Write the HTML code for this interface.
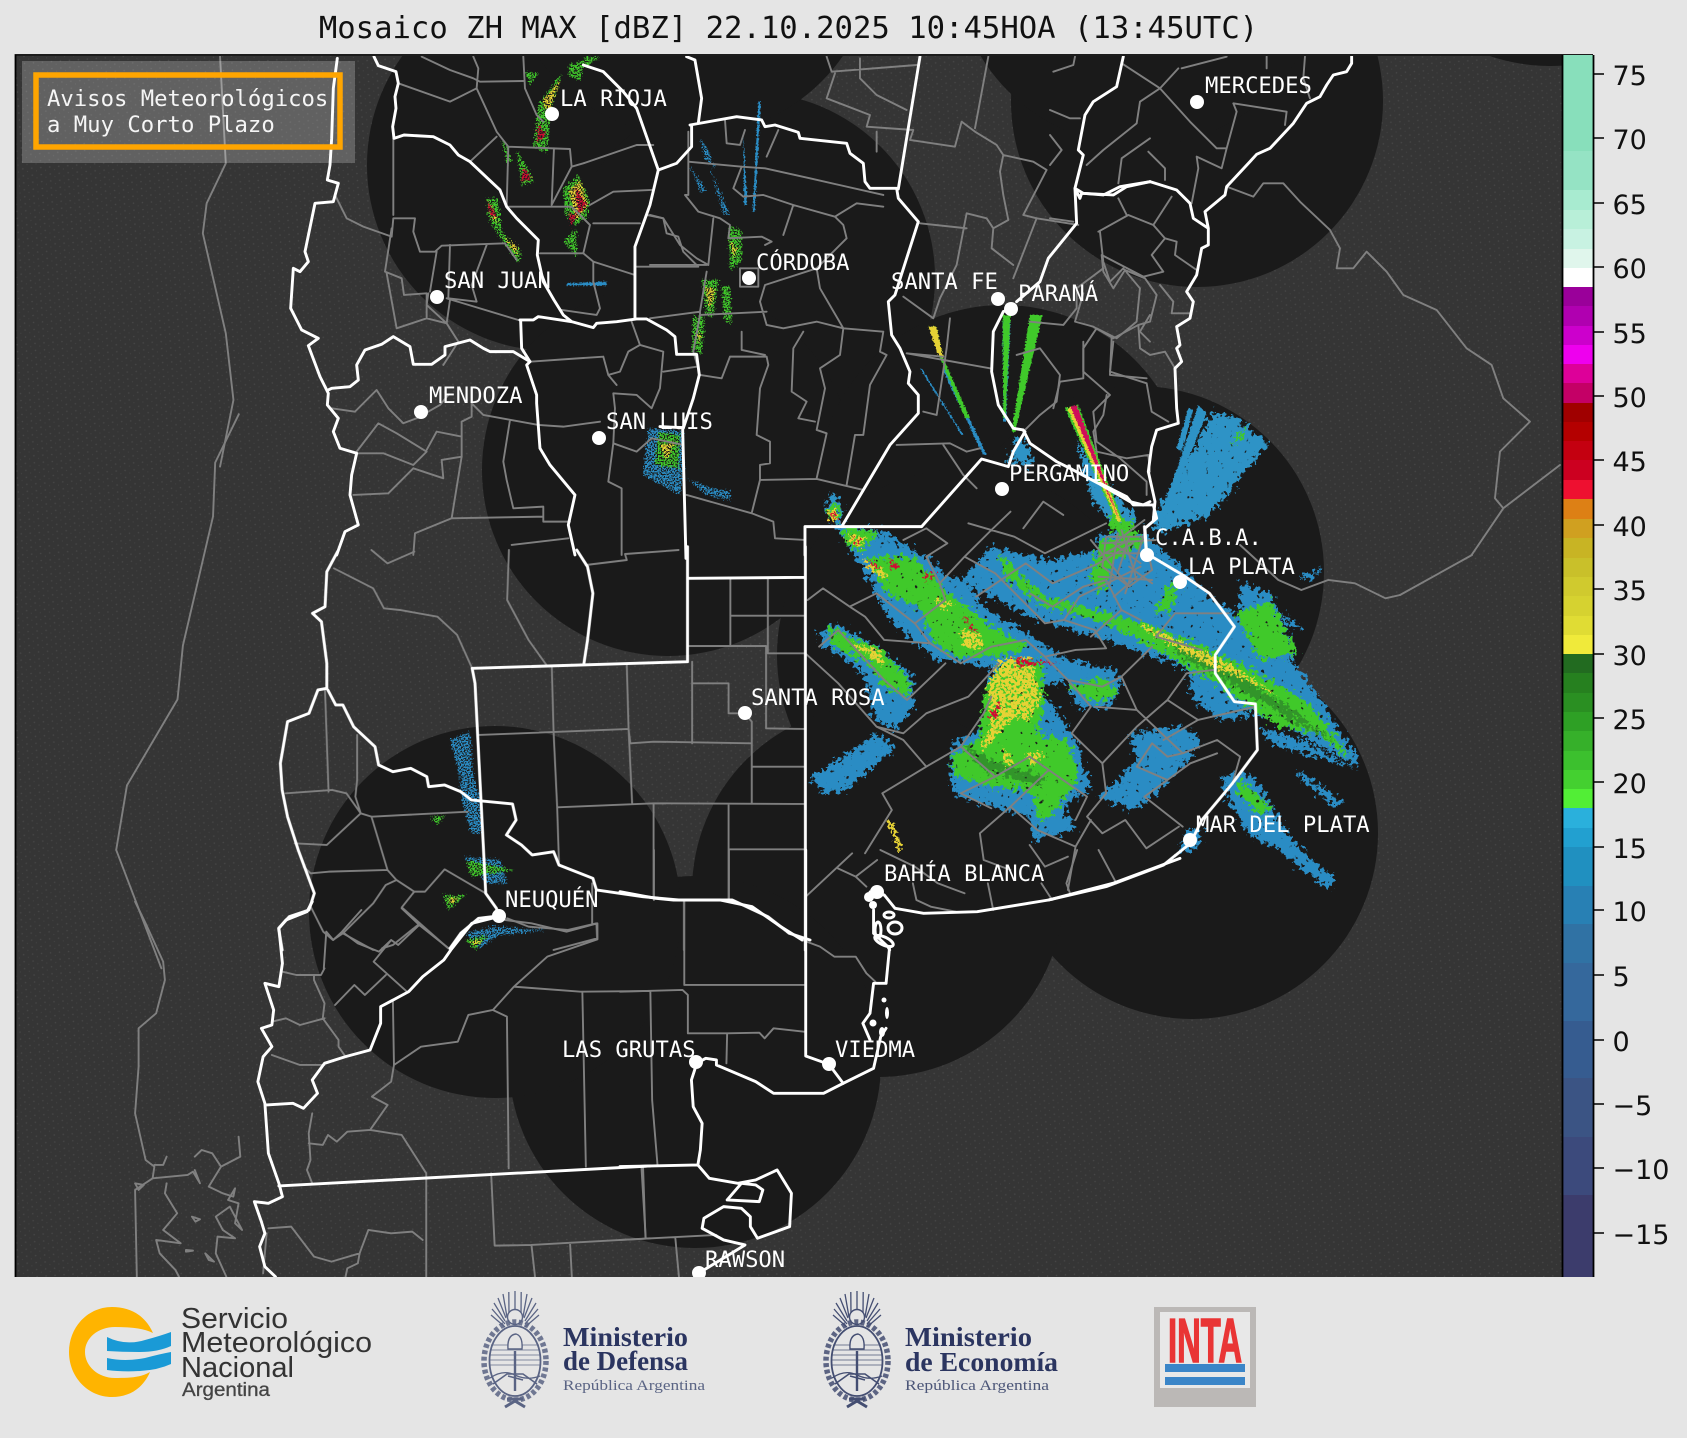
<!DOCTYPE html>
<html lang="es"><head><meta charset="utf-8"><title>Mosaico ZH MAX</title>
<style>
html,body{margin:0;padding:0;background:#e5e5e5;width:1687px;height:1438px;overflow:hidden}
svg{display:block}
.g path,.g polyline{fill:none;stroke:#808080;stroke-width:1.9;stroke-linejoin:round;stroke-linecap:round;vector-effect:non-scaling-stroke}
.w path{fill:none;stroke:#fff;stroke-width:2.9;stroke-linejoin:round;stroke-linecap:round;vector-effect:non-scaling-stroke}
.lab text{font-family:"DejaVu Sans Mono","Liberation Mono",monospace;font-size:22.2px;fill:#fff}
.tick text{font-family:"DejaVu Sans","Liberation Sans",sans-serif;font-size:27px;fill:#111}
</style></head><body>
<svg xmlns="http://www.w3.org/2000/svg" width="1687" height="1438" viewBox="0 0 1687 1438">
<defs>
<pattern id="dots" width="9" height="7" patternUnits="userSpaceOnUse" patternTransform="rotate(-4)"><rect width="9" height="7" fill="#353535"/><circle cx="2" cy="2" r=".8" fill="#474747"/><circle cx="6.5" cy="5" r=".6" fill="#424242"/></pattern>
<clipPath id="mapc"><rect x="16" y="56" width="1546" height="1221"/></clipPath>
<filter id="n" filterUnits="userSpaceOnUse" x="0" y="0" width="1687" height="1438"><feTurbulence type="fractalNoise" baseFrequency=".22" numOctaves="3" seed="4" result="t"/><feDisplacementMap in="SourceGraphic" in2="t" scale="18" xChannelSelector="R" yChannelSelector="G" result="d"/><feTurbulence type="fractalNoise" baseFrequency=".2" numOctaves="2" seed="7"/><feColorMatrix type="matrix" values="0 0 0 0 0 0 0 0 0 0 0 0 0 0 0 0 0 0 -12 9.6" result="m"/><feComposite in="d" in2="m" operator="in"/></filter>
<filter id="y" filterUnits="userSpaceOnUse" x="0" y="0" width="1687" height="1438"><feTurbulence type="fractalNoise" baseFrequency=".3" numOctaves="2" seed="11" result="t"/><feDisplacementMap in="SourceGraphic" in2="t" scale="12" xChannelSelector="R" yChannelSelector="G" result="d"/><feTurbulence type="fractalNoise" baseFrequency=".35" numOctaves="2" seed="3"/><feColorMatrix type="matrix" values="0 0 0 0 0 0 0 0 0 0 0 0 0 0 0 0 0 0 -14 8.6" result="m"/><feComposite in="d" in2="m" operator="in"/></filter>
<filter id="s" filterUnits="userSpaceOnUse" x="0" y="0" width="1687" height="1438"><feTurbulence type="fractalNoise" baseFrequency=".6" numOctaves="1" seed="9" result="t"/><feDisplacementMap in="SourceGraphic" in2="t" scale="9" xChannelSelector="R" yChannelSelector="G" result="d"/><feTurbulence type="fractalNoise" baseFrequency=".7" numOctaves="1" seed="5"/><feColorMatrix type="matrix" values="0 0 0 0 0 0 0 0 0 0 0 0 0 0 0 0 0 0 -16 9" result="m"/><feComposite in="d" in2="m" operator="in"/></filter>
<filter id="r" filterUnits="userSpaceOnUse" x="0" y="0" width="1687" height="1438"><feTurbulence type="fractalNoise" baseFrequency=".6" numOctaves="1" seed="2"/><feDisplacementMap in="SourceGraphic" scale="4" xChannelSelector="R" yChannelSelector="G"/></filter>
<symbol id="arms" viewBox="-40 -66 80 120" overflow="visible">
<path d="M0-46V-70M-6-46L-6.2-69M6-46L6.2-69M-8-44L-12-67M8-44L12-67M-9-43L-17-63M9-43L17-63M-10-40L-21-58M10-40L21-58M-10-37L-23-52M10-37L23-52M-10-34L-24-46M10-34L24-46" stroke="currentColor" stroke-width="1.3" fill="none"/>
<circle cx="0" cy="-44" r="7.5" fill="#e5e5e5" stroke="currentColor" stroke-width="1.4"/>
<ellipse cx="0" cy="0" rx="31" ry="39" fill="none" stroke="currentColor" stroke-width="5.5" stroke-dasharray="4 2.5" opacity=".85"/>
<ellipse cx="0" cy="0" rx="25.5" ry="35" fill="none" stroke="currentColor" stroke-width="1.8"/>
<path d="M-24-16H24M-25-11H25M-25.5-6H25.5M-25.5-1H25.5M-25.5 4H25.5" stroke="currentColor" stroke-width="1" opacity=".7" fill="none"/>
<path d="M-25 17Q-12 8 0 14T25 15" stroke="currentColor" stroke-width="1.3" fill="none"/>
<path d="M0-10V30" stroke="currentColor" stroke-width="2.4"/>
<path d="M-7-12Q-8-26 1-27Q8-25 7-12Z" fill="#e5e5e5" stroke="currentColor" stroke-width="1.4"/>
<path d="M-22 23L-8 13H8L22 23M-7 15L8 19" stroke="currentColor" stroke-width="1.6" fill="none"/>
<path d="M-10 46L0 40L10 46M-8 38H8" stroke="currentColor" stroke-width="3" fill="none"/>
</symbol>
</defs>

<text x="788.5" y="38" text-anchor="middle" font-family="DejaVu Sans Mono,Liberation Mono,monospace" font-size="30.6" fill="#111">Mosaico ZH MAX [dBZ] 22.10.2025 10:45HOA (13:45UTC)</text>

<g clip-path="url(#mapc)">
<rect x="16" y="56" width="1546" height="1221" fill="url(#dots)"/>
<g fill="#1a1a1a">
<circle cx="553" cy="165" r="186"/><circle cx="749" cy="278" r="186"/><circle cx="690" cy="-50" r="186"/>
<circle cx="1197" cy="101" r="186"/><circle cx="1140" cy="-40" r="186"/><circle cx="1550" cy="-120" r="186"/>
<circle cx="668" cy="470" r="186"/><circle cx="1003" cy="491" r="186"/><circle cx="1138" cy="572" r="186"/>
<circle cx="963" cy="655" r="186"/><circle cx="1192" cy="833" r="186"/><circle cx="878" cy="891" r="186"/>
<circle cx="695" cy="1062" r="186"/><circle cx="495" cy="912" r="186"/>
</g>

<!-- radar echoes -->
<g filter="url(#n)">
<g transform="translate(800 500) scale(.3827 .3333)">
<path fill="#2a8cc4" d="M390 800L400 730L470 690L480 600L500 500L650 600L720 720L760 860L690 920L720 990L610 1020L600 950L500 920L400 880ZM420 240L500 140L650 180L800 150L900 250L1100 310L1300 500L1450 760L1460 800L1300 700L1150 620L1000 500L800 420L600 350ZM60 10L120 80L210 90L340 180L380 230L430 240L480 320L620 420L700 480L820 510L840 560L810 620L720 620L700 540L640 560L500 500L360 480L240 370L160 200L100 90ZM50 400L90 370L200 440L290 520L300 620L250 690L190 650L170 530L110 470L60 440ZM30 830L200 700L250 740L120 870L60 880ZM860 700L1000 680L1050 720L1000 800L930 880L870 930L780 890L830 840L880 780ZM1100 830L1180 820L1290 1030L1400 1140L1380 1170L1250 1050L1170 1000L1120 900ZM1300 810L1420 910L1400 920L1310 840ZM1010 990L1050 990L1040 1040L990 1060ZM780 100L900 100L1040 250L1100 330L1000 340L860 300L760 220ZM1150 250L1230 280L1300 460L1260 500L1150 450ZM1200 680L1330 730L1440 800L1380 780L1230 730ZM1300 230L1360 210L1340 240ZM1260 340L1310 380L1280 385ZM1010 510L1090 540L1130 600L1180 650L1100 660L1030 600Z"/>
<path fill="#3fc92c" d="M390 780L470 710L480 580L530 480L630 480L640 600L620 700L700 720L730 830L690 900L630 970L600 870L500 860L410 830ZM170 170L300 170L370 260L500 380L600 440L520 470L400 470L340 410L320 330L230 280ZM520 160L640 290L900 370L1050 440L1200 520L1340 620L1440 780L1350 700L1250 680L1100 560L950 460L800 370L620 310L530 220ZM780 130L880 90L900 130L820 180L790 280L760 240ZM1140 340L1230 300L1300 460L1200 480ZM1150 840L1230 920L1210 950L1140 880ZM75 380L210 450L280 530L290 590L220 560L180 490L80 430ZM700 560L800 530L830 580L780 610ZM970 250L1000 240L960 340L930 330Z"/>
<path fill="#2d7f28" d="M950 410L1100 490L1250 600L1400 730L1300 670L1140 560L1000 470ZM420 730L520 790L640 830L620 860L480 810Z" opacity=".7"/>
</g>
<g transform="translate(1050 55) scale(.3333)">
<path fill="#2e93c6" d="M300 1410L490 1070L560 1090L655 1165L480 1380L340 1430Z"/>
<path fill="#3fc92c" d="M545 1170L590 1110L570 1165Z"/>
</g>
<g transform="translate(650 55) scale(.3333)">
<path fill="#2e93c6" d="M1075 1225L1100 1140L1140 1180L1145 1230ZM1280 1150L1350 1260L1470 1400L1400 1420L1330 1340Z"/>
<path fill="#2e93c6" d="M525 1370L545 1315L580 1350L570 1410Z"/>
<path fill="#3fc92c" d="M530 1375L555 1345L575 1360L565 1405ZM575 1415L680 1430L640 1490L590 1470ZM1380 1380L1450 1400L1440 1440L1385 1430Z"/>
</g>
</g>
<g filter="url(#y)">
<g transform="translate(800 500) scale(.3827 .3333)">
<path fill="#e6d236" d="M490 560L520 480L600 470L630 590L600 660L560 650L520 700L480 750L470 740L500 680ZM525 730L560 790L540 800ZM590 760L640 760L610 800ZM415 390L470 400L480 450L430 440ZM350 300L400 310L370 330ZM160 170L220 210L230 240L180 210ZM130 430L210 450L220 500ZM890 370L1120 490L1250 590L1200 560L1040 480L900 390ZM1380 680L1420 720L1400 700ZM130 100L150 140L120 120ZM225 960L240 965L270 1050L260 1055Z"/>
<path fill="#d01030" d="M560 475L680 490L600 495L570 505ZM425 350L470 400L440 385ZM235 175L262 200L235 208ZM320 215L370 228L330 238ZM175 175L215 205L190 200ZM490 650L525 600L510 660ZM80 30L100 65L75 55Z"/>
</g>
<g transform="translate(650 55) scale(.3333)">
<path fill="#e6d236" d="M535 1365L560 1365L560 1400L540 1400ZM600 1440L650 1450L625 1480Z"/>
<path fill="#d01030" d="M540 1375L555 1375L555 1395ZM610 1450L635 1455L620 1470Z"/>
</g>
</g>
<g filter="url(#s)">
<g transform="translate(250 55) scale(.3333)">
<path fill="#2a8cc4" d="M1195 1120L1300 1130L1300 1250L1290 1320L1180 1260ZM1310 1270L1380 1300L1440 1310L1440 1335L1370 1320Z"/>
<path fill="#3fc92c" d="M1225 1130L1290 1140L1285 1240L1215 1230ZM940 400L985 360L1020 440L1010 490L975 510L945 480ZM940 560L980 520L980 605ZM865 150L935 55L905 160L890 295L850 275ZM710 430L745 430L755 530L815 590L805 625L765 570L715 490ZM755 250L790 320L770 325ZM800 285L855 380L815 390ZM825 50L865 55L840 90ZM955 30L1005 15L990 75L955 65ZM1000 5L1050 5L1010 35Z"/>
<path fill="#e6d236" d="M955 410L990 375L1015 450L980 495ZM875 140L930 75L895 175ZM760 545L800 570L805 605ZM1230 1170L1275 1160L1250 1215ZM725 450L745 510L720 480Z"/>
<path fill="#d01030" d="M975 395L1010 450L985 475ZM865 205L890 240L860 265ZM710 430L740 485L722 485ZM820 335L845 372L815 380ZM765 265L787 315ZM955 475L980 478L965 515Z"/>
</g>
<g transform="translate(650 55) scale(.3333)">
<path fill="#2a8cc4" d="M150 250L178 290L195 340L165 310ZM180 340L240 480L222 480ZM120 330L170 410L150 410Z"/>
<path fill="#3fc92c" d="M235 515L275 525L275 620L240 645ZM155 675L205 675L190 785L170 785ZM130 785L165 785L155 895L125 885ZM215 695L240 695L245 805L222 795Z"/>
<path fill="#e6d236" d="M165 695L195 705L180 765ZM240 560L262 580L250 610ZM140 830L155 840L145 870Z"/>
</g>
<g transform="translate(250 550) scale(.35714 .3333)">
<path fill="#2a8cc4" d="M560 570L615 545L625 680L645 750L650 850L620 850L595 760L585 670ZM605 1150L680 1130L830 1140L700 1155L640 1195ZM600 920L700 930L720 1000L660 1000Z"/>
<path fill="#3fc92c" d="M605 930L740 960L620 980ZM540 1035L605 1035L555 1080ZM605 1170L665 1155L630 1200ZM505 800L545 795L525 825Z"/>
<path fill="#e6d236" d="M555 1045L585 1045L560 1065ZM620 1175L650 1170L630 1190Z"/>
</g>
</g>
<g filter="url(#r)">
<g transform="translate(1050 55) scale(.3333)">
<path fill="#2e93c6" d="M335 1380L445 1050L470 1075L345 1390ZM380 1180L415 1060L430 1065L395 1190Z"/>
</g>
<g transform="translate(250 55) scale(.3333)"><path fill="#2a8cc4" d="M950 685L1070 680L1070 692L950 692Z"/></g>
<g transform="translate(650 55) scale(.3333)">
<path fill="#2a8cc4" d="M325 140H332L315 470H308ZM280 240L292 450L282 450ZM885 930L1010 1200L1000 1200L880 950ZM1058 800H1082L1068 1100H1060ZM810 940L818 945L940 1140L935 1140Z"/>
<path fill="#3fc92c" d="M1140 780H1178L1095 1130H1085ZM1058 780H1082L1067 1090H1060ZM835 815H860L880 910L960 1090L945 1090L875 920Z"/>
<path fill="#e6d236" d="M835 815H860L880 910L865 900Z"/>
<path fill="#3fc92c" d="M1245 1060L1285 1050L1420 1400L1400 1400Z"/>
<path fill="#e6d236" d="M1252 1060L1278 1052L1415 1400L1404 1400Z"/>
<path fill="#d0105a" d="M1262 1056L1280 1050L1410 1400Z"/>
</g>
</g>

<!-- grey boundaries -->
<g class="g">
<path transform="translate(0 0) scale(.3827 .3333)" d="M575 170L590 490L540 610L530 700L590 1000L610 1200L575 1400"/>
<path transform="scale(1.0759)" d="M222 385L200 430L198 480L170 600L165 650L118 730L108 790L150 900"/>
<g transform="translate(250 55) scale(.3333)">
<path d="M515 5L600 45L670 70L690 80L820 78M445 85L600 140L680 100L685 40L670 5M680 100L740 230L775 275L960 282L965 335L905 450L912 280M660 320L740 245M775 275L770 455L965 455L1020 510L1000 595L870 595M820 5L825 100L860 180L880 200M965 335L1000 325L1160 270L1210 270M1020 450L1090 410L1205 405M1030 505L1170 505M1190 480L1240 490L1250 535L1285 545L1300 590L1345 635L1160 635M1155 660L1030 620L1000 595M1030 620L1030 680L1050 760L1040 780L935 765"/>
<path d="M255 420L290 490L340 515L425 545L430 490L495 490L490 530L510 590L555 590L575 572L765 565L800 615M425 520L405 650L455 670L462 720L530 715L530 790L440 820L410 655M430 250L430 480M600 570L595 730L680 740L665 690L710 570M560 590L540 710M590 730L805 795M530 790L590 805L625 860L580 930M535 715L530 750L590 805L600 735"/>
<path d="M245 1060L315 1070L380 1005L415 1060L460 1105L500 1090L570 1050L595 1020M320 1190L385 1105L440 1135L530 1190L490 1230L400 1195L320 1195M490 1240L580 1270L575 1215L635 1205L635 1145L560 1130L530 1185M490 1240L415 1315L310 1320M635 1205L635 1100L665 1085L665 1045L700 1080L865 1110L940 1115L1050 1100M635 1205L605 1390L495 1435L490 1500M605 1390L880 1385L880 1355L790 1360L770 1275L760 1220L780 1095M880 1385L880 1400L960 1400M785 1470L955 1450"/>
<path d="M1100 990L1075 960L1060 905L840 920M1075 960L1110 950L1135 890L1170 870L1240 890L1230 1000L1205 1060L1160 1020L1090 1015L1095 1060L1090 1165L1160 1190L1205 1150L1300 1170M1090 1165L1075 1280L1115 1300L1115 1500M1240 950L1340 935M1145 800L1170 870"/>
</g>
<g transform="translate(650 55) scale(.3333)">
<path d="M115 320L275 335L345 340L480 370L700 420M225 195L230 265L270 270L285 225M350 305L385 225M115 230L115 420L105 420L145 470L210 490L240 510L235 550L335 545L365 560L345 570M275 335L250 400L280 425L340 420L430 450L555 485L580 510L590 550L500 640M555 485L620 445L700 455M430 450L400 540M500 640L345 690L330 740L350 810L400 820L500 800L580 820L700 830M270 640H325V695H270ZM500 640L510 700L580 820M0 630H170M0 480L40 490L90 570L140 610L175 630L190 490M170 650L150 770L150 780L350 770M0 790L150 770M150 780L130 890L150 960L215 970L240 905L350 905L355 930L330 1000M275 830L275 885L345 900M580 820L570 900L510 940L525 1000L500 1125L530 1135L500 1270M460 830L430 880L425 1010L470 1040L445 1090L495 1100M700 830L690 890L710 900L660 990L640 1140L615 1140L590 1290M330 1000L320 1140L360 1160L360 1225L330 1230L330 1275L500 1272L640 1305M330 1275L305 1375L110 1320M305 1375L370 1400L375 1450L465 1455"/>
<path d="M530 5L545 50L800 30M555 55L530 130L660 180L650 215L790 225L780 255L915 275L935 200L975 230L1040 270L1060 300L1150 320L1190 345L1120 480L1160 490M630 10L630 70L680 120L770 165M1060 300L1050 350L1060 420L1075 495L1030 520L1025 580L1090 630M950 475L1010 490L1030 520M950 475L920 630L870 730L850 790L760 725M810 505L950 520M1160 490L1285 510M1160 490L1090 670M680 230V290M1015 5L975 220M880 905L770 895L1020 940M900 790L890 880L860 1080L820 1070M1100 900L1170 880L1230 960L1220 1040L1170 1080L1120 1130M1350 530L1360 620L1380 680L1420 640L1470 700L1460 800L1400 850L1340 820L1300 880L1300 950L1380 1020L1330 1070L1340 1160L1410 1210L1490 1280L1490 1320M1385 850L1380 960L1490 970M1500 780L1470 830L1500 860M1140 800L1240 810L1280 760L1280 700L1360 640M740 1170L900 1165L950 1190L990 1180M880 1170L940 1260L980 1300M1120 1420L1180 1340L1240 1380"/>
</g>
<g transform="translate(1050 55) scale(.3333)">
<path d="M145 530L235 480L310 510L345 550L380 560L375 600L440 645M345 550L305 600L340 650L280 665L155 600L160 650L190 700L225 645L285 670L320 720L300 800L265 810L270 880L300 900L345 890L375 940M230 480L205 430M310 510L365 425M0 490L70 500M330 690L370 740L365 775L420 775M265 810L190 850L130 815L75 800L100 715M190 860L180 950L290 985L305 1070L355 1100M100 860L100 970L30 980L10 1060M170 1020L160 1080L130 1130L140 1190L230 1210L295 1200L300 1250"/>
<path d="M215 25L330 100L420 200L500 280L530 280L560 170L550 145L710 170L705 210M330 100L270 140L260 205L160 285L110 330M385 40L330 100M530 280L515 340L440 305L445 340L425 445M300 250L215 310L205 385M295 290L345 340L345 375M395 40L530 5M650 5V40M765 5L760 70L780 130M10 50L70 30L75 5M0 165L60 190H90M0 240L35 285L0 330"/>
<path d="M530 395L610 425L640 385H700L750 440L840 525L870 580L860 640H910L950 590L1010 650L1060 720L1160 765L1250 880L1325 930L1360 1030L1440 1100L1350 1190L1335 1330L1360 1360L1530 1230M1360 1360L1265 1500"/>
</g>
<g transform="translate(800 500) scale(.3827 .3333)">
<path d="M270 120L330 85L385 130L330 170L365 250L380 300L300 370L340 430L420 490L500 440L590 420L640 470L720 450L800 445L770 390L690 360M365 250L430 170L510 220L640 370M460 290L590 190L660 250L780 190L870 130M430 170L500 90L550 35M640 370L690 360L730 290L820 240L890 200M20 300L60 265L130 320L200 280L300 370M130 320L170 350L220 420L340 430M50 440L100 390L220 540L280 600L380 490M14 460L100 550L200 680L270 700L330 640L440 590L520 490M200 680L270 720L330 800L215 880L240 930L170 1060M330 800L420 740L480 640L500 590M420 740L510 830L600 770L650 810L550 920L470 1000M510 830L420 880L500 925M650 810L750 890L720 960M550 920L620 990L720 1040M720 1040L760 960M720 1040L700 1170M640 470L700 540L790 560L840 530L880 630L770 620M840 530L920 440M880 630L1000 760L1090 720L1150 770L1130 850M700 540L760 620L710 700L790 790L800 880L750 950L790 1000L850 960L905 1045L990 980M790 790L880 680L960 600L1010 520L1080 510M960 600L1040 660L1190 620M1000 760L960 770L920 730L880 800L960 840L1020 790L1090 760M960 840L900 890L1000 980M1040 660L950 720M470 1000L480 1080L550 1110M210 1050L300 1100L360 1150L430 1180M600 1035L640 1100L700 1070M440 70L560 110L640 160L800 70M600 280L660 320L740 260L800 240L840 330L890 360M840 330L760 410M930 410L980 340L1030 340L1120 340M930 410L1050 450"/>
<path d="M800 110L900 110L920 210L860 260L790 200ZM820 130L890 190M860 110L830 220M800 160L910 160M840 90L880 240M780 170L860 120M860 200L920 250M880 230L820 290M900 60L820 130M790 130L930 120M780 230L920 240M830 100L810 250M900 100L850 280M760 120L860 260M1150 135L1250 240L1310 270L1380 240L1450 250L1530 295L1568 285"/>
</g>
<path d="M1400 595L1472 555"/>
<g transform="translate(250 550) scale(.35714 .3333)">
<path d="M640 555L1060 537L1065 580L1130 575L1405 580M845 350L850 545L860 770L865 935M1055 345L1060 537L1070 760M860 772L1130 760L1550 762M1130 760V1040M1340 765V1050M1340 898H1550M1238 335V580M1238 400H1340V490H1385L1405 515V760M1225 288H1445V535L1555 537M1345 85V285M1345 197H1550M1450 85V310H1555M1405 650H1550M1215 1050V1200M235 55L345 115L375 175L420 180L525 200L580 255L622 355M725 0L720 150L780 270L830 345M940 45L1055 30L1050 12L1200 0M340 0L385 40L460 5"/>
<path d="M210 420L220 725M100 730L230 720L270 730L310 790L215 885L125 880M300 555V690L295 740L310 790L340 800L610 785M340 800L385 960L220 965L170 970L150 950M385 960L410 990L460 1025H490L545 958L660 1030M460 1025L425 1072L555 1195M410 990L380 1005L345 1060L260 1150L232 1170L205 1145L170 1070M470 1125L400 1185L370 1195M260 1150L345 1200M720 1105L780 1130L890 1140L970 1120L972 1165L850 1200M958 1000V1120"/>
</g>
<g transform="translate(100 900) scale(.3508 .3333)">
<path d="M860 25L910 75L1000 150M910 75L850 135L830 120L780 185L875 275M745 30L690 95L665 120L645 95L638 205M690 95L735 130L795 155L830 120M815 225L755 285L725 255L670 315M610 225V240L640 310L635 355L680 420V440L700 470M490 365L530 355L570 375L640 355M490 465L570 495H640M520 215L560 225H630L640 205M605 640L595 700L600 780L590 810L605 850M595 730L635 735L650 705L675 725L705 695L770 690L860 705L930 820V1130M770 690L820 615L775 590L830 545L838 495L835 305M838 495L915 440L1020 425L1050 345L1120 330L1160 350L1165 805M1120 330L1180 260L1370 275L1568 273M1180 260L1275 170L1418 118V70L1330 95L1230 70L1155 60M1375 275L1385 800M1115 820L1125 1037L1230 1035L1568 1015M1548 800L1555 1015M1230 1035L1240 1130M1340 1030L1345 1130M480 985L545 980L610 1070L660 1085L740 1060L735 1090L705 1105L700 1130M740 1060L765 990L830 1000L890 995L920 1020M465 1120L475 1000"/>
<path d="M100 5L130 70L180 185L185 240L160 340L110 385V500L100 640L130 780L155 800L150 835L100 870L105 1130M155 795H180L190 770M150 835L250 825L265 815L285 850L270 810M270 770L290 750L320 760L345 800L400 770L395 710M345 800L310 860L350 880L380 890L385 865L365 900L395 910L385 970L405 990L370 920L330 950L350 990L385 1015L335 1010L330 1060L360 1130M190 850L185 880L220 940L180 990L230 1030L160 1020L170 1060L215 1110L225 1130M100 850L125 855L110 870ZM262 950L285 958L272 965ZM245 1050L265 1052L245 1055ZM300 1060L325 1085L310 1080Z"/>
</g>
<g transform="translate(620 850) scale(.35714 .3333)">
<path d="M180 150V405H515M305 0V150M95 0V150M0 425L175 420L190 435V550H300L390 548L405 565L430 535L515 545M85 425L90 750L105 945M300 550L298 640M60 950L72 1165M0 1170L270 1155M155 1165L165 1280M510 270L560 290L600 320H660L690 370L715 395M520 140L650 10M610 55L660 80L690 110M660 80L720 30M820 100L830 150L870 170L940 185M1030 100L1045 180M1180 100L1210 150M1280 0L1250 100L1260 130M1340 0L1390 100"/>
</g>
</g>

<!-- white boundaries -->
<g class="w">
<g transform="translate(250 55) scale(.3333)">
<path d="M372 5L385 32L438 50L445 85L435 125L438 160L428 215L432 250L462 240L550 245L600 270L625 300L660 320L750 405L770 455L800 490L865 555L862 600L880 680L912 735L940 780L965 800L1030 818L1040 805L1100 800L1160 792H1190L1250 825L1275 845L1280 898H1340L1348 960L1330 1030L1300 1120M810 795L850 795L865 785L965 800M812 795L815 880L840 920"/>
<path d="M262 10L250 100L245 250L240 330L232 375L265 385L250 440L195 445L165 590L175 620L150 650L130 640L122 760L155 825L205 850L175 872L210 965L235 1015L232 1050L265 1090L250 1130L270 1180L320 1195L305 1260L300 1320L325 1410L285 1430L260 1500"/>
<path d="M235 1005L245 1000L300 995L325 975L320 930L345 885L395 868L430 845L480 875L490 928H545L585 900V875L660 855L700 880L720 890H790L840 920L830 930L860 1020V1045L870 1180L900 1230L975 1320L955 1410L975 1500"/>
<path d="M1000 30L1060 50L1120 110L1160 160L1225 345L1280 325L1325 275V210M1310 5L1335 15L1355 130L1345 205M1225 345L1200 450L1155 575V790M1230 1115L1300 1118M1298 1118L1308 1510"/>
</g>
<g transform="translate(650 55) scale(.3333)">
<path d="M120 210L260 185L335 195L345 215L375 210L445 232L450 250L590 265L600 295L640 325L645 380L660 400H740L745 430L805 500L735 720L715 740L725 840L750 880L780 950L775 985L805 1020V1075L720 1170L578 1410"/>
<path d="M810 5L745 402M465 1500V1415H815L995 1212L1040 1225L1075 1235M1060 770L1030 830L1025 950L1045 1050L1090 1120L1120 1125L1140 1165L1220 1220L1260 1240L1345 1285L1440 1340L1480 1350L1500 1340M1125 1130L1090 1190L1075 1235M1100 740L1170 680L1195 610L1280 505L1275 400L1300 300L1285 285L1305 180L1330 140L1400 95L1420 5M1275 400L1290 430L1295 415L1390 420L1430 395L1500 380M1060 770L1085 760"/>
</g>
<g transform="translate(1050 55) scale(.3333)">
<path d="M300 380L380 405L420 445L430 490L475 520V570L455 580L440 660L410 710L430 740L420 790L380 815L390 870L380 880L395 920L375 940L380 1060L385 1105L320 1125L305 1175L295 1250L315 1340L310 1395M75 400L100 415L160 420L210 395L300 380M475 520L465 470L525 420L530 395L600 320L620 298L660 280L730 205L770 145L810 125L830 90L850 60L890 50L905 25V5M150 1285L230 1325L250 1350H310L320 1390L285 1420L290 1500"/>
</g>
<g transform="translate(800 500) scale(.3827 .3333)">
<path d="M900 80L905 160L1000 225L1070 280L1135 380L1085 465V520L1135 605L1190 612L1195 750L1130 850L1050 960L1020 1030L950 1095L800 1160L650 1200"/>
</g>
<g transform="translate(250 550) scale(.35714 .3333)">
<path d="M915 0L945 50L960 130L945 270L935 340"/>
<path d="M245 5L215 65L210 170L175 190L200 215L215 340V415L190 420L165 490L105 515L85 640L90 720L105 800L135 900L180 1030L165 1080L110 1100L80 1135L90 1200"/>
<path d="M218 420L240 465H260L290 530L350 590L360 645L400 665L450 655L495 680L500 710L545 705L590 725L620 750L735 762L745 810L718 855L760 885L790 915L850 905L865 945L960 985L970 1020L1100 1040L1200 1050H1350L1450 1100L1510 1150L1568 1170"/>
<path d="M622 355L1225 335V-10M1225 85L1555 82M1555 -10V1200M622 355L630 400L660 1030L690 1075L695 1098L640 1105L590 1150L560 1195"/>
</g>
<g transform="translate(100 900) scale(.3508 .3333)">
<path d="M605 5L590 35L530 60L510 85L520 190L510 260L470 250L495 330L490 375L460 385L490 440L465 470L450 545L470 610L480 760L510 850L520 890L480 910L440 905L460 965L470 1000L455 1040L470 1100L500 1130"/>
<path d="M1135 50L1060 70L1000 150L980 180L920 230L880 275L800 320V370L770 450L700 470L640 490L605 540L620 580L580 625L550 610L475 615M510 858L1568 798"/>
</g>
<g transform="translate(620 850) scale(.35714 .3333)">
<path d="M0 125L100 145L150 150H280L370 170L450 230L510 270M520 0V618L585 643L625 700"/>
<path d="M215 640L200 690L205 770L230 820L225 900L218 945L250 985L330 1000L380 990L440 960L480 1030L475 1130L385 1165L365 1130V1100L340 1075L290 1070L235 1105L230 1135L290 1170L350 1185L220 1270M0 950L218 945M340 1000L300 1050L390 1055L400 1020L380 1005ZM215 640L240 625L270 630L270 645L380 695L430 730H570L625 700L710 655L730 560L745 535"/>
<path d="M740 135L770 175L850 190L1000 185L1200 150L1380 100L1568 25M755 290L745 400H710L700 490L680 520L700 570M710 180V250L750 290L755 300"/>
</g>
<g>
<path d="M870 892L884 895" stroke-width="9"/>
</g>
</g>
<!-- Bahía Blanca estuary and Viedma islands -->
<g fill="#fff">
<circle cx="869" cy="897" r="5"/><circle cx="873" cy="905" r="4"/><circle cx="884" cy="1000" r="2.5"/><circle cx="873" cy="1023" r="3.5"/>
<ellipse cx="887" cy="1013" rx="2" ry="6"/><ellipse cx="882" cy="1032" rx="3" ry="5"/>
</g>
<g fill="none" stroke="#fff" stroke-width="3">
<ellipse cx="889" cy="915" rx="5" ry="3"/><ellipse cx="895" cy="928" rx="7" ry="6"/><ellipse cx="884" cy="941" rx="10" ry="4" transform="rotate(25 884 941)"/><ellipse cx="878" cy="930" rx="3" ry="8"/>
</g>

<!-- warning box -->
<rect x="22" y="61" width="333" height="102" fill="#fff" fill-opacity=".22"/>
<rect x="36" y="75" width="304" height="72" fill="none" stroke="#ffa500" stroke-width="5.5"/>
<text font-family="DejaVu Sans Mono,Liberation Mono,monospace" font-size="22.25" fill="#f5f5f5"><tspan x="47" y="106">Avisos Meteorológicos</tspan><tspan x="47" y="132">a Muy Corto Plazo</tspan></text>

<!-- station dots -->
<g fill="#fff">
<circle cx="552" cy="114" r="7"/><circle cx="437" cy="297" r="7"/><circle cx="421" cy="412" r="7"/><circle cx="599" cy="438" r="7"/><circle cx="749" cy="278" r="7"/><circle cx="998" cy="299" r="7"/><circle cx="1011" cy="309" r="7"/><circle cx="1002" cy="489" r="7"/><circle cx="1197" cy="102" r="7"/><circle cx="1147" cy="555" r="7"/><circle cx="1180" cy="582" r="7"/><circle cx="1190" cy="840" r="7"/><circle cx="877" cy="892" r="7"/><circle cx="745" cy="713" r="7"/><circle cx="499" cy="916" r="7"/><circle cx="696" cy="1062" r="7"/><circle cx="829" cy="1064" r="7"/><circle cx="699" cy="1273" r="7"/>
</g>
<g class="lab">
<text x="560" y="106">LA RIOJA</text><text x="444" y="288">SAN JUAN</text><text x="429" y="403">MENDOZA</text><text x="606" y="429">SAN LUIS</text><text x="756" y="270">CÓRDOBA</text><text x="891" y="289">SANTA FE</text><text x="1018" y="301">PARANÁ</text><text x="1009" y="481">PERGAMINO</text><text x="1205" y="93">MERCEDES</text><text x="1155" y="545">C.A.B.A.</text><text x="1188" y="574">LA PLATA</text><text x="1196" y="832">MAR DEL PLATA</text><text x="884" y="881">BAHÍA BLANCA</text><text x="751" y="705">SANTA ROSA</text><text x="505" y="907">NEUQUÉN</text><text x="562" y="1057">LAS GRUTAS</text><text x="835" y="1057">VIEDMA</text><text x="705" y="1267">RAWSON</text>
</g>
</g>

<!-- frame -->
<path d="M15.5 1277V55H1593" fill="none" stroke="#000" stroke-width="1.8"/>

<!-- colorbar -->
<g>
<rect x="1563" y="55" width="30" height="96" fill="#88dfbb"/><rect x="1563" y="151" width="30" height="39" fill="#95e3c4"/><rect x="1563" y="190" width="30" height="20" fill="#a8ebd0"/><rect x="1563" y="210" width="30" height="19" fill="#b8efd8"/><rect x="1563" y="229" width="30" height="20" fill="#c8f2e2"/><rect x="1563" y="249" width="30" height="19" fill="#e0f6ec"/><rect x="1563" y="268" width="30" height="19" fill="#fff"/>
<rect x="1563" y="287" width="30" height="19" fill="#9a009a"/><rect x="1563" y="306" width="30" height="20" fill="#b000b0"/><rect x="1563" y="326" width="30" height="19" fill="#cc00cc"/><rect x="1563" y="345" width="30" height="19" fill="#ee00ee"/><rect x="1563" y="364" width="30" height="19" fill="#dd0099"/><rect x="1563" y="383" width="30" height="20" fill="#c40066"/>
<rect x="1563" y="403" width="30" height="19" fill="#a00000"/><rect x="1563" y="422" width="30" height="19" fill="#b40000"/><rect x="1563" y="441" width="30" height="19" fill="#c40010"/><rect x="1563" y="460" width="30" height="20" fill="#cc0020"/><rect x="1563" y="480" width="30" height="19" fill="#ee1030"/>
<rect x="1563" y="499" width="30" height="20" fill="#dd8015"/><rect x="1563" y="519" width="30" height="19" fill="#d0a020"/><rect x="1563" y="538" width="30" height="20" fill="#c8b424"/><rect x="1563" y="558" width="30" height="19" fill="#c9c02a"/><rect x="1563" y="577" width="30" height="19" fill="#d0ca2e"/><rect x="1563" y="596" width="30" height="20" fill="#d6d230"/><rect x="1563" y="616" width="30" height="19" fill="#e0dc34"/><rect x="1563" y="635" width="30" height="19" fill="#f0ea3a"/>
<rect x="1563" y="654" width="30" height="19" fill="#226b20"/><rect x="1563" y="673" width="30" height="20" fill="#26801f"/><rect x="1563" y="693" width="30" height="19" fill="#2a8f22"/><rect x="1563" y="712" width="30" height="19" fill="#2ea025"/><rect x="1563" y="731" width="30" height="20" fill="#36b02a"/><rect x="1563" y="751" width="30" height="19" fill="#3cc02e"/><rect x="1563" y="770" width="30" height="19" fill="#44d030"/><rect x="1563" y="789" width="30" height="19" fill="#52ee36"/>
<rect x="1563" y="808" width="30" height="20" fill="#2ab0dc"/><rect x="1563" y="828" width="30" height="19" fill="#22a0d0"/><rect x="1563" y="847" width="30" height="39" fill="#2090c0"/><rect x="1563" y="886" width="30" height="38" fill="#2880b4"/><rect x="1563" y="924" width="30" height="39" fill="#3072a4"/><rect x="1563" y="963" width="30" height="58" fill="#35689c"/><rect x="1563" y="1021" width="30" height="57" fill="#365c90"/><rect x="1563" y="1078" width="30" height="59" fill="#3b5484"/><rect x="1563" y="1137" width="30" height="58" fill="#3c4a7c"/><rect x="1563" y="1195" width="30" height="82" fill="#3c3c6c"/>
<path d="M1562.5 55V1277M1593.5 55V1277" stroke="#000" stroke-width="1.8" fill="none"/>
<path d="M1593 74H1604M1593 138H1604M1593 203H1604M1593 267H1604M1593 332H1604M1593 396H1604M1593 460H1604M1593 525H1604M1593 589H1604M1593 654H1604M1593 718H1604M1593 782H1604M1593 847H1604M1593 910H1604M1593 975H1604M1593 1040H1604M1593 1104H1604M1593 1168H1604M1593 1233H1604" stroke="#000" stroke-width="1.6"/>
</g>
<g class="tick">
<text x="1612.5" y="85">75</text><text x="1612.5" y="149">70</text><text x="1612.5" y="214">65</text><text x="1612.5" y="278">60</text><text x="1612.5" y="343">55</text><text x="1612.5" y="407">50</text><text x="1612.5" y="471">45</text><text x="1612.5" y="536">40</text><text x="1612.5" y="600">35</text><text x="1612.5" y="665">30</text><text x="1612.5" y="729">25</text><text x="1612.5" y="793">20</text><text x="1612.5" y="858">15</text><text x="1612.5" y="921">10</text><text x="1612.5" y="986">5</text><text x="1612.5" y="1051">0</text><text x="1612.5" y="1115">−5</text><text x="1612.5" y="1179">−10</text><text x="1612.5" y="1244">−15</text>
</g>

<!-- footer logos -->
<path d="M153 1333C145 1315 130 1307 112 1307C88 1307 69 1327 69 1352C69 1377 88 1397 112 1397C130 1397 143 1388 150 1372C140 1378 128 1378 115 1378C98 1378 85 1366 85 1352C85 1338 98 1327 115 1327C130 1327 143 1328 153 1333Z" fill="#ffb400"/>
<path d="M107 1337Q125 1346 145 1340Q160 1336 171 1332V1346Q158 1352 140 1352Q122 1352 107 1351ZM107 1358Q125 1362 145 1358Q160 1354 171 1352V1364Q158 1370 140 1371Q122 1372 107 1370Z" fill="#1a9ad6"/>
<g font-family="Liberation Sans,sans-serif" fill="#333">
<text x="181" y="1328" font-size="29" textLength="107" lengthAdjust="spacingAndGlyphs">Servicio</text>
<text x="181" y="1352" font-size="29" textLength="191" lengthAdjust="spacingAndGlyphs">Meteorológico</text>
<text x="181" y="1377" font-size="29" textLength="113" lengthAdjust="spacingAndGlyphs">Nacional</text>
<text x="182" y="1396" font-size="19" textLength="88" lengthAdjust="spacingAndGlyphs" fill="#444" stroke="#444" stroke-width=".3">Argentina</text>
</g>
<use href="#arms" x="475" y="1295" width="80" height="120" color="#5a6484"/>
<g font-family="Liberation Serif,serif">
<text x="563" y="1346" font-size="27" font-weight="700" fill="#2b3560" textLength="125" lengthAdjust="spacingAndGlyphs">Ministerio</text>
<text x="563" y="1370" font-size="27" font-weight="700" fill="#2b3560" textLength="125" lengthAdjust="spacingAndGlyphs">de Defensa</text>
<text x="563" y="1390" font-size="15" fill="#5a6484" textLength="142" lengthAdjust="spacingAndGlyphs">República Argentina</text>
</g>
<use href="#arms" x="817" y="1295" width="80" height="120" color="#444e72"/>
<g font-family="Liberation Serif,serif">
<text x="905" y="1346" font-size="27" font-weight="700" fill="#2b3560" textLength="127" lengthAdjust="spacingAndGlyphs">Ministerio</text>
<text x="905" y="1371" font-size="27" font-weight="700" fill="#2b3560" textLength="153" lengthAdjust="spacingAndGlyphs">de Economía</text>
<text x="905" y="1390" font-size="15" fill="#4c5678" textLength="144" lengthAdjust="spacingAndGlyphs">República Argentina</text>
</g>
<rect x="1154" y="1307" width="102" height="100" fill="#bbb8b6"/>
<rect x="1160" y="1312" width="90" height="76" fill="#e8e8e8"/>
<text x="1168" y="1362" font-family="Liberation Sans,sans-serif" font-weight="700" font-size="62" fill="#e93535" stroke="#e93535" stroke-width="1.6" textLength="74" lengthAdjust="spacingAndGlyphs">INTA</text>
<rect x="1165" y="1364" width="80" height="8" fill="#3a85c8"/><rect x="1165" y="1377" width="80" height="8" fill="#3a85c8"/>
</svg>
</body></html>
